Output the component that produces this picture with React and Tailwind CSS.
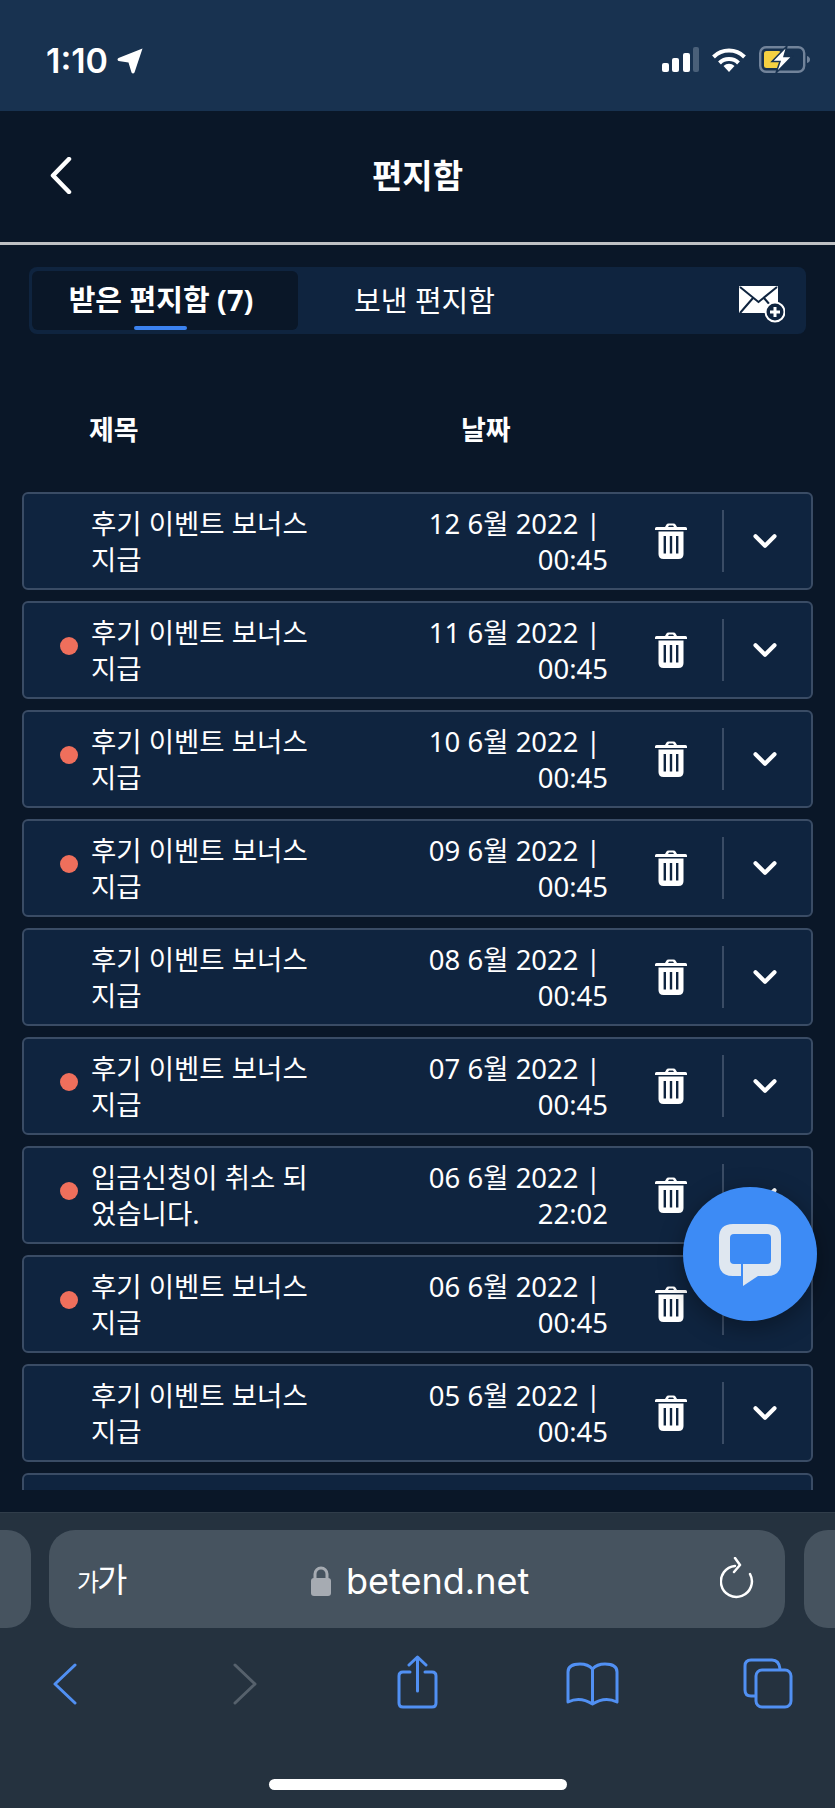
import { ChevronDown } from "lucide-react";

const sans = { fontFamily: '"Noto Sans", "Noto Sans CJK KR", sans-serif' };

const messages = [
    { day: "12", time: "00:45", unread: false, title: "후기 이벤트 보너스 지급" },
    { day: "11", time: "00:45", unread: true, title: "후기 이벤트 보너스 지급" },
    { day: "10", time: "00:45", unread: true, title: "후기 이벤트 보너스 지급" },
    { day: "09", time: "00:45", unread: true, title: "후기 이벤트 보너스 지급" },
    { day: "08", time: "00:45", unread: false, title: "후기 이벤트 보너스 지급" },
    { day: "07", time: "00:45", unread: true, title: "후기 이벤트 보너스 지급" },
    { day: "06", time: "22:02", unread: true, title: "입금신청이 취소 되었습니다." },
    { day: "06", time: "00:45", unread: true, title: "후기 이벤트 보너스 지급" },
    { day: "05", time: "00:45", unread: false, title: "후기 이벤트 보너스 지급" },
];

function TrashIcon() {
    return (
        <svg viewBox="0 0 32 36" className="w-[32px] h-[36px] shrink-0" fill="#fff">
            <path d="M10 4 L11.500 1.500 Q12 .5 13.500 .5 H18.500 Q20 .5 20.500 1.500 L22 4 H30.500 Q32 4 32 5.500 V7 H0 V5.500 Q0 4 1.500 4 Z M13 4 H19 L18 2.500 H14 Z" fillRule="evenodd" />
            <path d="M3.500 8.500 H28.500 V31 Q28.500 36 23.500 36 H8.500 Q3.500 36 3.500 31 Z" />
            <g fill="#0f243f">
                <rect x="8.600" y="13" width="2.400" height="17.500" />
                <rect x="14.800" y="13" width="2.400" height="17.500" />
                <rect x="21" y="13" width="2.400" height="17.500" />
            </g>
        </svg>
    );
}

function MessageRow({ message }) {
    return (
        <div className="flex items-center h-[98px] shrink-0 rounded-[6px] border-2 border-[#3a4c65] bg-[#0f243f] text-white">
            <div className="w-[67px] flex justify-end pr-[13px] shrink-0">
                {message.unread && <span className="block w-[18px] h-[18px] -mt-[8px] rounded-full bg-[#ef6f5c]" />}
            </div>
            <div className="w-[226px] mr-[24px] mt-[2px] shrink-0 text-[27.500px] leading-[36.500px]">{message.title}</div>
            <div className="w-[194px] ml-[73px] mt-[2px] shrink-0 text-right text-[27.500px] leading-[36.500px]">
                {message.day} 6월 2022 |&nbsp; {message.time}
            </div>
            <div className="ml-[47px] shrink-0">
                <TrashIcon />
            </div>
            <div className="ml-[35px] w-[2px] h-[62px] bg-[#3a4c65] shrink-0" />
            <ChevronDown className="ml-[22px] w-[38px] h-[38px] shrink-0" strokeWidth={2.600} />
        </div>
    );
}

function StatusBar() {
    return (
        <div className="h-[111px] shrink-0 bg-[#183250] flex items-start justify-between pt-[43px] pl-[46px] pr-[23px] text-white">
            <div className="flex items-center gap-[9px]">
                <span className="text-[34px] leading-[36px] font-semibold" style={{ fontFamily: '"Inter", sans-serif' }}>1:10</span>
                <svg viewBox="0 0 26 26" className="w-[26px] h-[26px]" fill="#fff">
                    <path d="M25.500 .5 L17.500 24.500 Q16 26.500 14.500 24.500 L11.500 14.500 L1.500 13 Q-.5 11.500 1.500 10 Z" />
                </svg>
            </div>
            <div className="flex items-center gap-[13px] mt-[3px]">
                <svg viewBox="0 0 37 25" className="w-[37px] h-[25px]">
                    <rect x="0" y="16" width="7" height="9" rx="2" fill="#fff" />
                    <rect x="10" y="11" width="7" height="14" rx="2" fill="#fff" />
                    <rect x="21" y="6" width="7" height="19" rx="2" fill="#fff" />
                    <rect x="31" y="0" width="6" height="25" rx="2" fill="#4a6079" />
                </svg>
                <svg viewBox="0 0 34 25" className="w-[34px] h-[25px]" fill="none" stroke="#fff" strokeWidth="4">
                    <path d="M1.500 10 A22 22 0 0 1 32.500 10" />
                    <path d="M7.500 16 A13.500 13.500 0 0 1 26.500 16" />
                    <path d="M17 25 L11.500 19 A8 8 0 0 1 22.500 19 Z" fill="#fff" stroke="none" />
                </svg>
                <svg viewBox="0 0 53 27" className="w-[53px] h-[27px]">
                    <rect x="1.200" y="1.200" width="44" height="24.600" rx="6" fill="none" stroke="#71839a" strokeWidth="2.400" />
                    <rect x="5" y="5" width="17" height="17" rx="2.500" fill="#f5d142" />
                    <path d="M48 10 Q51 11 51 13.500 Q51 16 48 17 Z" fill="#71839a" />
                    <path d="M28 0 L13 15.500 H21 L17 27 L33 10.500 H25 Z" fill="#fff" stroke="#183250" strokeWidth="1.500" />
                </svg>
            </div>
        </div>
    );
}

function TabRow() {
    return (
        <div className="mx-[29px] mt-[22px] h-[67px] shrink-0 flex items-center rounded-[8px] bg-[#0f243f] pl-[3px] pr-[22px] text-white">
            <div className="relative w-[266px] h-[59px] -mt-[1px] pr-[8px] rounded-[6px] bg-[#0a1728] flex items-center justify-center text-[29px] font-bold">
                받은 편지함 (7)
                <span className="absolute left-[102px] bottom-[0px] w-[53px] h-[4px] rounded-[2px] bg-[#3b82f0]" />
            </div>
            <div className="ml-[56px] text-[29px]">보낸 편지함</div>
            <svg viewBox="0 0 46 37" className="ml-auto mt-[7px] -mr-[1px] w-[46px] h-[37px]">
                <rect x="0" y="0" width="39" height="27" rx="1" fill="#fff" />
                <path d="M1 1 L19.500 16 L38 1 M1 27 L14 12 M38 27 L25 12" fill="none" stroke="#0f243f" strokeWidth="2" />
                <circle cx="36" cy="26" r="9.500" fill="#0f243f" stroke="#fff" strokeWidth="2" />
                <path d="M36 21 V31 M31 26 H41" stroke="#fff" strokeWidth="3" />
            </svg>
        </div>
    );
}

function SafariBar() {
    return (
        <div className="relative h-[296px] shrink-0 bg-[#25323f] border-t border-[#303d4a] text-white">
            <div className="flex pt-[17px]">
                <div className="w-[31px] h-[98px] shrink-0 rounded-r-[24px] bg-[#46535f]" />
                <div className="ml-[18px] w-[736px] h-[98px] shrink-0 rounded-[26px] bg-[#46535f] flex items-center relative pl-[28px]">
                    <span className="text-[24px] mt-[4px]" style={{ fontFamily: '"Noto Sans CJK KR", sans-serif' }}>가</span>
                    <span className="text-[33px] -ml-[2px]" style={{ fontFamily: '"Noto Sans CJK KR", sans-serif' }}>가</span>
                    <div className="absolute left-[262px] top-[33px] flex items-center gap-[15px]">
                        <svg viewBox="0 0 20 30" className="w-[20px] h-[30px]" fill="#a6abb2">
                            <path d="M4 13 V8 A6 6 0 0 1 16 8 V13" fill="none" stroke="#a6abb2" strokeWidth="3" />
                            <rect x="0" y="12" width="20" height="18" rx="3" />
                        </svg>
                        <span className="text-[36px] leading-[36px]" style={{ fontFamily: '"Inter", sans-serif' }}>betend.net</span>
                    </div>
                    <svg viewBox="0 0 34 42" className="absolute left-[671px] top-[27px] w-[34px] h-[42px]" fill="none" stroke="#fff" strokeWidth="2.500" strokeLinecap="round" strokeLinejoin="round">
                        <path d="M15 9 A15.500 15.500 0 1 0 30 17" />
                        <path d="M15 1 L20 8 L14 15" />
                    </svg>
                </div>
                <div className="ml-[19px] flex-1 h-[98px] rounded-l-[24px] bg-[#46535f]" />
            </div>
            <div className="flex items-start h-[60px] mt-[27px] relative">
                <svg viewBox="0 0 24 42" className="ml-[53px] mt-[8px] w-[24px] h-[42px]" fill="none" stroke="#5190f3" strokeWidth="3" strokeLinecap="round" strokeLinejoin="round">
                    <path d="M22 2 L2 21 L22 40" />
                </svg>
                <svg viewBox="0 0 24 42" className="ml-[156px] mt-[8px] w-[24px] h-[42px]" fill="none" stroke="#56616c" strokeWidth="3" strokeLinecap="round" strokeLinejoin="round">
                    <path d="M2 2 L22 21 L2 40" />
                </svg>
                <svg viewBox="0 0 41 54" className="ml-[140px] w-[41px] h-[54px]" fill="none" stroke="#5190f3" strokeWidth="3" strokeLinecap="round" strokeLinejoin="round">
                    <path d="M13 17 H6 Q2 17 2 21 V48 Q2 52 6 52 H35 Q39 52 39 48 V21 Q39 17 35 17 H28" />
                    <path d="M20.500 36 V2 M12 10 L20.500 2 L29 10" />
                </svg>
                <svg viewBox="0 0 53 44" className="ml-[128px] mt-[7px] w-[53px] h-[44px]" fill="none" stroke="#5190f3" strokeWidth="3" strokeLinecap="round" strokeLinejoin="round">
                    <path d="M26.500 7 Q22 2 14 2 Q2 2 2 10 V40 Q14 34 26.500 42 Q39 34 51 40 V10 Q51 2 39 2 Q31 2 26.500 7 Z" />
                    <path d="M26.500 7 V40" />
                </svg>
                <svg viewBox="0 0 50 51" className="ml-[124px] mt-[3px] w-[50px] h-[51px]" fill="none" stroke="#5190f3" strokeWidth="3" strokeLinejoin="round">
                    <path d="M12 38 H8 Q2 38 2 32 V8 Q2 2 8 2 H29 Q36 2 37 11" />
                    <rect x="13" y="12" width="35" height="37" rx="6" />
                </svg>
            </div>
            <div className="absolute left-[269px] bottom-[18px] w-[298px] h-[11px] rounded-full bg-white" />
        </div>
    );
}

export default function App() {
    return (
        <div className="relative w-[835px] h-[1808px] overflow-hidden flex flex-col bg-[#0a1728]" style={sans}>
            <StatusBar />

            <div className="h-[131px] shrink-0 flex items-center justify-center relative text-white">
                <svg viewBox="0 0 22 37" className="absolute left-[50px] top-[46px] w-[22px] h-[37px]" fill="none" stroke="#fff" strokeWidth="4.500" strokeLinecap="round" strokeLinejoin="round">
                    <path d="M19 2 L3 18.500 L19 35" />
                </svg>
                <span className="text-[33px] font-bold -mt-[2px]">편지함</span>
            </div>
            <div className="h-[3px] shrink-0 bg-[#bfc1c4]" />

            <TabRow />

            <div className="flex h-[158px] shrink-0 pt-[76px] text-white text-[27px] font-bold leading-[40px]">
                <span className="ml-[89px] w-[372px]">제목</span>
                <span>날짜</span>
            </div>

            <div className="h-[998px] shrink-0 mx-[22px] overflow-hidden flex flex-col gap-[11px]">
                {messages.map((message, i) => (
                    <MessageRow key={i} message={message} />
                ))}
                {/* next row is cut off by the scroll area, only its top edge shows */}
                <div className="h-[98px] shrink-0 rounded-[6px] border-2 border-[#3a4c65] bg-[#0f243f]" />
            </div>

            <div className="h-[22px] shrink-0" />

            <SafariBar />

            <button className="absolute left-[683px] top-[1187px] w-[134px] h-[134px] rounded-full bg-[#3d8bf5] flex items-center justify-center shadow-[0_6px_24px_rgba(0,0,0,0.35)]">
                <svg viewBox="0 0 62 62" className="w-[62px] h-[62px] mt-[1px]">
                    <path d="M14 0 H48 Q62 0 62 14 V38 Q62 52 48 52 H39 L24 62 V40 H22 V52 H14 Q0 52 0 38 V14 Q0 0 14 0 Z" fill="#dfe7f0" />
                    <path d="M15 10 H48 Q52 10 52 14 V36 Q52 40 48 40 H15 Q11 40 11 36 V14 Q11 10 15 10 Z" fill="#3d8bf5" />
                </svg>
            </button>
        </div>
    );
}
